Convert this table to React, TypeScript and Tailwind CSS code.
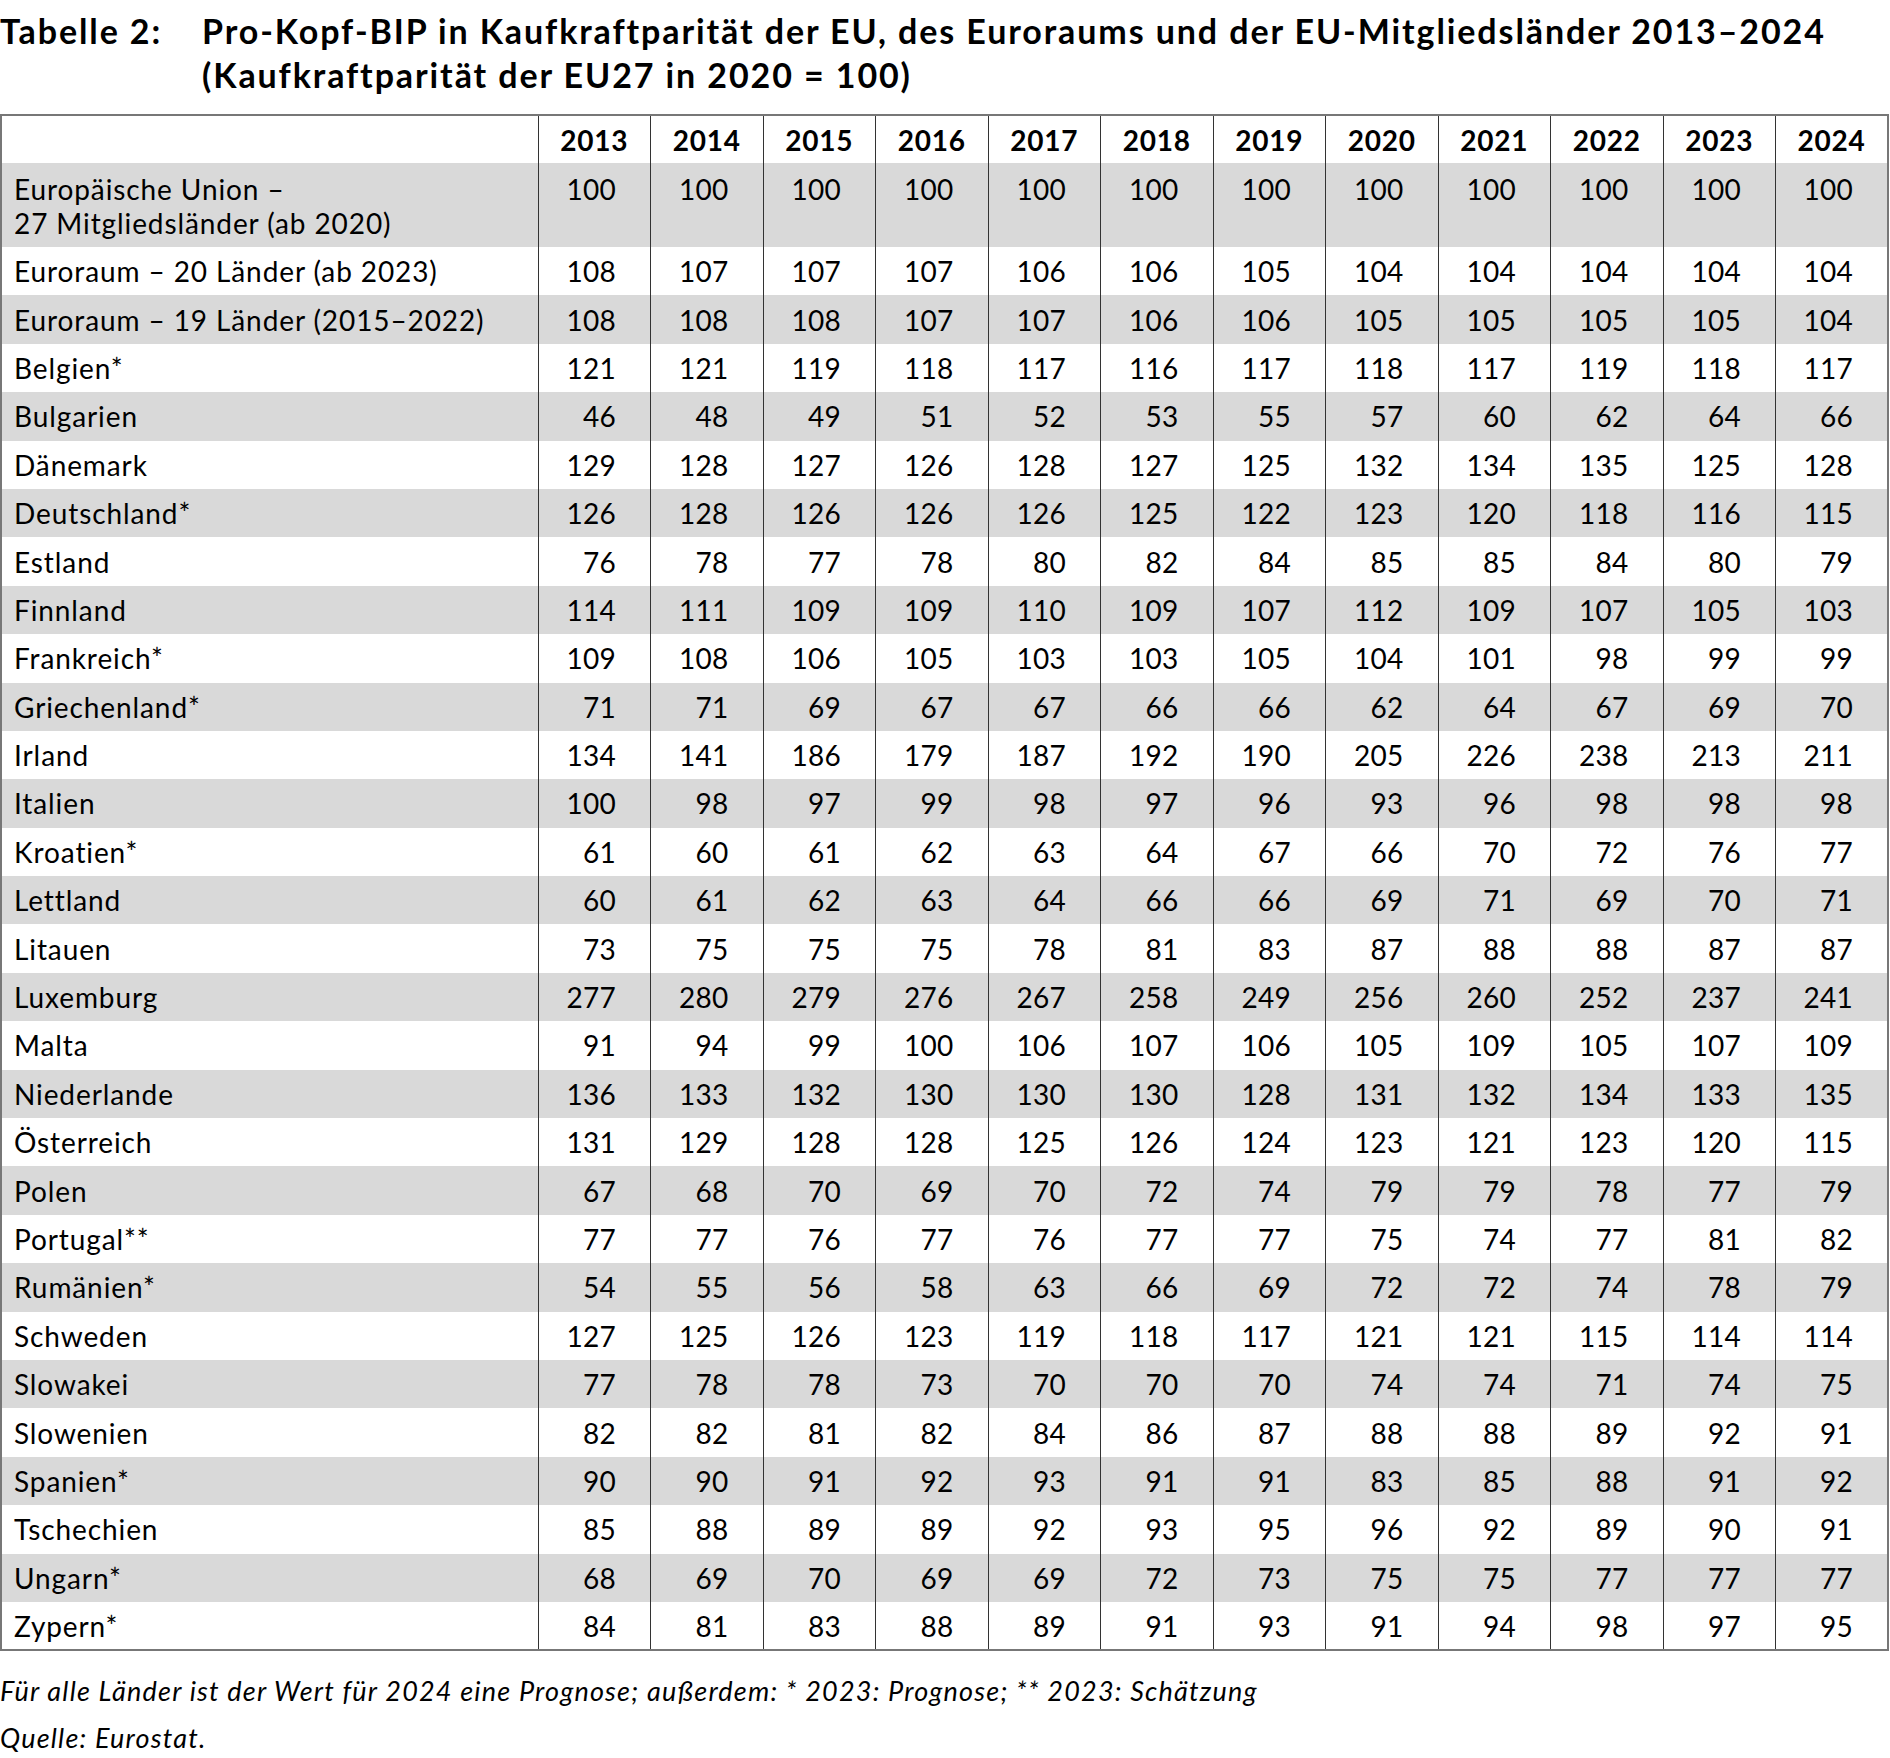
import React from 'react';

const years = [2013, 2014, 2015, 2016, 2017, 2018, 2019, 2020, 2021, 2022, 2023, 2024];

type Row = { label: React.ReactNode; values: number[] };

const rows: Row[] = [
    {
        label: (
            <>
                Europäische Union –<br />
                27 Mitgliedsländer (ab 2020)
            </>
        ),
        values: [100, 100, 100, 100, 100, 100, 100, 100, 100, 100, 100, 100],
    },
    { label: 'Euroraum – 20 Länder (ab 2023)', values: [108, 107, 107, 107, 106, 106, 105, 104, 104, 104, 104, 104] },
    { label: 'Euroraum – 19 Länder (2015–2022)', values: [108, 108, 108, 107, 107, 106, 106, 105, 105, 105, 105, 104] },
    { label: 'Belgien*', values: [121, 121, 119, 118, 117, 116, 117, 118, 117, 119, 118, 117] },
    { label: 'Bulgarien', values: [46, 48, 49, 51, 52, 53, 55, 57, 60, 62, 64, 66] },
    { label: 'Dänemark', values: [129, 128, 127, 126, 128, 127, 125, 132, 134, 135, 125, 128] },
    { label: 'Deutschland*', values: [126, 128, 126, 126, 126, 125, 122, 123, 120, 118, 116, 115] },
    { label: 'Estland', values: [76, 78, 77, 78, 80, 82, 84, 85, 85, 84, 80, 79] },
    { label: 'Finnland', values: [114, 111, 109, 109, 110, 109, 107, 112, 109, 107, 105, 103] },
    { label: 'Frankreich*', values: [109, 108, 106, 105, 103, 103, 105, 104, 101, 98, 99, 99] },
    { label: 'Griechenland*', values: [71, 71, 69, 67, 67, 66, 66, 62, 64, 67, 69, 70] },
    { label: 'Irland', values: [134, 141, 186, 179, 187, 192, 190, 205, 226, 238, 213, 211] },
    { label: 'Italien', values: [100, 98, 97, 99, 98, 97, 96, 93, 96, 98, 98, 98] },
    { label: 'Kroatien*', values: [61, 60, 61, 62, 63, 64, 67, 66, 70, 72, 76, 77] },
    { label: 'Lettland', values: [60, 61, 62, 63, 64, 66, 66, 69, 71, 69, 70, 71] },
    { label: 'Litauen', values: [73, 75, 75, 75, 78, 81, 83, 87, 88, 88, 87, 87] },
    { label: 'Luxemburg', values: [277, 280, 279, 276, 267, 258, 249, 256, 260, 252, 237, 241] },
    { label: 'Malta', values: [91, 94, 99, 100, 106, 107, 106, 105, 109, 105, 107, 109] },
    { label: 'Niederlande', values: [136, 133, 132, 130, 130, 130, 128, 131, 132, 134, 133, 135] },
    { label: 'Österreich', values: [131, 129, 128, 128, 125, 126, 124, 123, 121, 123, 120, 115] },
    { label: 'Polen', values: [67, 68, 70, 69, 70, 72, 74, 79, 79, 78, 77, 79] },
    { label: 'Portugal**', values: [77, 77, 76, 77, 76, 77, 77, 75, 74, 77, 81, 82] },
    { label: 'Rumänien*', values: [54, 55, 56, 58, 63, 66, 69, 72, 72, 74, 78, 79] },
    { label: 'Schweden', values: [127, 125, 126, 123, 119, 118, 117, 121, 121, 115, 114, 114] },
    { label: 'Slowakei', values: [77, 78, 78, 73, 70, 70, 70, 74, 74, 71, 74, 75] },
    { label: 'Slowenien', values: [82, 82, 81, 82, 84, 86, 87, 88, 88, 89, 92, 91] },
    { label: 'Spanien*', values: [90, 90, 91, 92, 93, 91, 91, 83, 85, 88, 91, 92] },
    { label: 'Tschechien', values: [85, 88, 89, 89, 92, 93, 95, 96, 92, 89, 90, 91] },
    { label: 'Ungarn*', values: [68, 69, 70, 69, 69, 72, 73, 75, 75, 77, 77, 77] },
    { label: 'Zypern*', values: [84, 81, 83, 88, 89, 91, 93, 91, 94, 98, 97, 95] },
];

export default function App() {
    return (
        <div className="w-[1890px] min-h-[1758px] bg-white text-black font-['Lato','Open_Sans',sans-serif]">
            {/* Title */}
            <div className="flex pt-[9px] text-[34px] font-bold leading-[44px] tracking-[1.9px]">
                <div className="w-[202px] shrink-0">Tabelle 2:</div>
                <div>
                    <div>Pro-Kopf-BIP in Kaufkraftparität der EU, des Euroraums und der EU-Mitgliedsländer 2013–2024</div>
                    <div>(Kaufkraftparität der EU27 in 2020 = 100)</div>
                </div>
            </div>

            {/* Table */}
            <table className="mt-[17px] w-[1889px] table-fixed border-collapse border-2 border-[#777] text-[28px]">
                <colgroup>
                    <col className="w-[537px]" />
                    {years.map((y) => (
                        <col key={y} />
                    ))}
                </colgroup>
                <thead>
                    <tr className="h-[48px] bg-white">
                        <th className="border-r border-[#333]" />
                        {years.map((y) => (
                            <th key={y} className="border-r border-[#333] text-center font-bold leading-[34px] tracking-[0.8px]">
                                {y}
                            </th>
                        ))}
                    </tr>
                </thead>
                <tbody>
                    {rows.map((row, i) => (
                        <tr key={i} className={`${i === 0 ? 'h-[84px]' : 'h-[48.4px]'} ${i % 2 === 0 ? 'bg-[#d9d9d9]' : 'bg-white'}`}>
                            <td className={`border-r border-[#333] pl-[12px] leading-[34px] tracking-[0.9px] ${i === 0 ? 'align-top pt-[9px]' : 'align-middle'}`}>
                                {row.label}
                            </td>
                            {row.values.map((v, j) => (
                                <td
                                    key={j}
                                    className={`border-r border-[#333] pr-[34px] text-right leading-[34px] tracking-[0.3px] ${i === 0 ? 'align-top pt-[9px]' : 'align-middle'}`}
                                >
                                    {v}
                                </td>
                            ))}
                        </tr>
                    ))}
                </tbody>
            </table>

            {/* Footnotes */}
            <div className="mt-[16px] text-[27px] italic leading-[47px] tracking-[1.2px]">
                <p>Für alle Länder ist der Wert für 2024 eine Prognose; außerdem: * 2023: Prognose; ** 2023: Schätzung</p>
                <p>Quelle: Eurostat.</p>
            </div>
        </div>
    );
}
